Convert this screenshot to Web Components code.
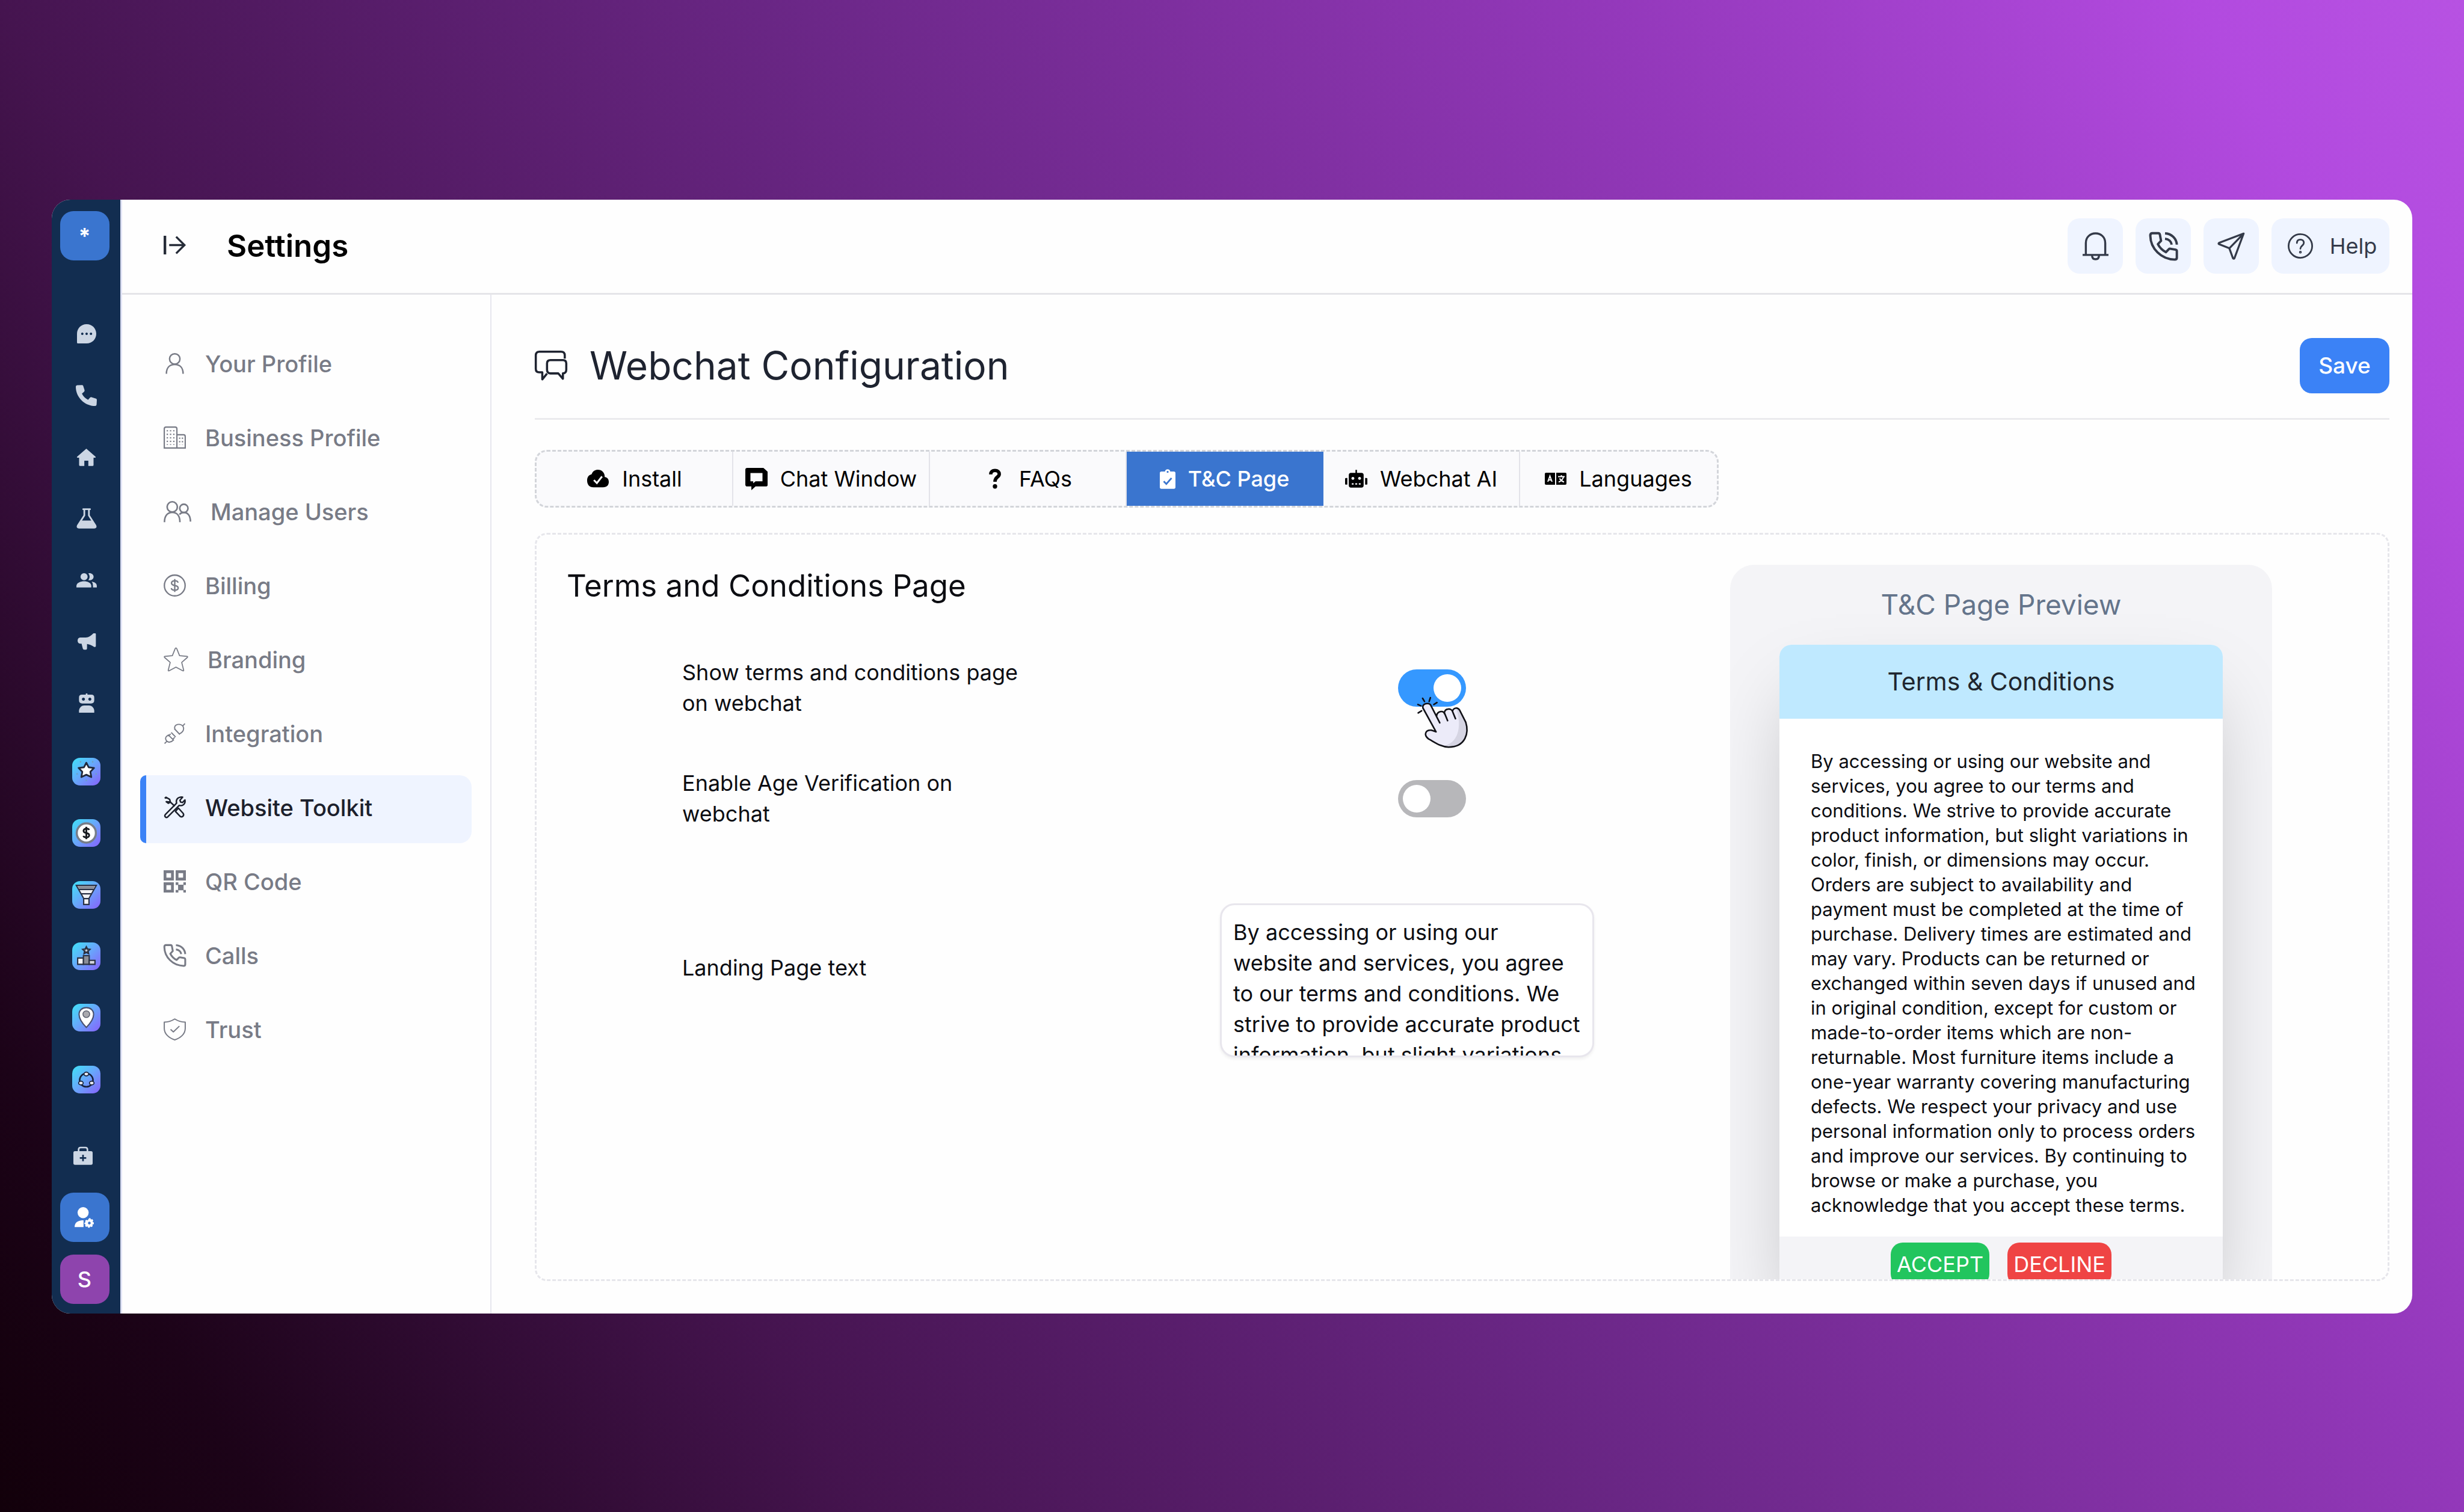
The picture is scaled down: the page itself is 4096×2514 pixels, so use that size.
<!DOCTYPE html>
<html lang="en">
<head>
<meta charset="utf-8">
<title>Settings – Webchat Configuration</title>
<style>
  html, body { margin: 0; height: 100%; }
  body {
    font-family: Inter, "Liberation Sans", sans-serif;
    color: #0c0d12;
    background: linear-gradient(60deg, #12000a 0%, #1c0318 8%, #45144f 26%, #6b2787 50%, #9338ba 74%, #b24adf 92%, #b752e2 100%);
  }
</style>
</head>
<body>
<settings-app></settings-app>

<script>
const ICONS = {
  chat: [24, 24, 32, 32, '<path fill="currentColor" fill-rule="evenodd" d="M12 0C18.8 0 24 5.2 24 12S18.8 24 12 24H1.2Q0 24 0 22.8V12C0 5.2 5.2 0 12 0ZM6.6 10.5a1.5 1.5 0 1 0 .01 0ZM12 10.5a1.5 1.5 0 1 0 .01 0ZM17.4 10.5a1.5 1.5 0 1 0 .01 0Z"/>'],
  phone: [24, 24, 35, 35, '<path fill="currentColor" d="M1.6.4 7 .1Q8 .1 8.4 1L10 6Q10.200 7 9.500 7.700L7 10C8.500 13.200 10.800 15.500 14 17L16.300 14.400Q17 13.700 18 14L23 15.600Q24 16 24 17L23.700 22.400Q23.500 24 22 24C10 24 0 14 0 2Q0 .5 1.600 .4Z"/>'],
  home: [24, 24, 33, 32, '<path fill="currentColor" d="M12 1.500 23.600 11.600Q24 12.600 23 12.800H21V22Q21 23 20 23H14.500V16.500H9.500V23H4Q3 23 3 22V12.800H1Q0 12.600.4 11.600Z"/>'],
  flask: [24, 24, 34, 36, '<path fill="none" stroke="currentColor" stroke-width="2" stroke-linejoin="round" stroke-linecap="round" d="M8 1.200H16M9.300 1.200V8.500L1.600 20.500Q.8 22.800 3 22.800H21Q23.200 22.800 22.400 20.500L14.700 8.500V1.200"/><path fill="currentColor" d="M5.500 14.500H18.500L22.500 21V23H1.500V21Z"/>'],
  people: [24, 17, 34, 24, '<g fill="currentColor"><circle cx="9" cy="4.200" r="4.200"/><path d="M0 16.800V15C0 11.500 5 9.600 9 9.600S17.500 11.500 17.500 15V16.800Z"/><path d="M14 .3C16.500-.6 20.200 1 20.200 4.200S16.500 9 14 8.100C16 5.800 16 2.600 14 .3ZM18 10C21.500 10.600 24 12.300 24 15V16.800H19.500V15Q19.700 12 18 10Z"/></g>'],
  horn: [24, 24, 32, 32, '<path fill="currentColor" d="M20.500 1.500H22.500Q23.500 1.500 23.500 2.500V17.500Q23.500 18.500 22.500 18.500H21.500C17.500 16 14.500 15 12.500 14.800V20Q12.500 22 10.500 22H9Q7.600 22 7.200 20.500L5.700 14.500H4C-.3 14.500-.3 6.800 4 6.800H11C14.500 6.600 17.500 4.500 20.500 1.500Z"/>'],
  bot: [24, 24, 32, 34, '<g fill="currentColor"><path fill-rule="evenodd" d="M11 0H13V1.500H18Q21.500 1.500 21.500 5V8.500Q21.500 12.500 17.500 12.500H6.500Q2.500 12.500 2.500 8.500V5Q2.500 1.500 6 1.500H11ZM8 5.200a1.900 1.900 0 1 0 .01 0ZM16 5.200a1.900 1.900 0 1 0 .01 0Z"/><path d="M2.500 24V21Q4 15 9 15H15Q20 15 21.500 21V24Z"/></g>'],
  bag: [24, 24, 32, 32, '<path fill="none" stroke="currentColor" stroke-width="2" d="M6.500 7V4Q6.500 1.500 9 1.500H15Q17.500 1.500 17.500 4V7"/><path fill="currentColor" fill-rule="evenodd" d="M2 6H22Q24 6 24 8V21Q24 23 22 23H2Q0 23 0 21V8Q0 6 2 6ZM11 10.500V13.500H8V15.500H11V18.500H13V15.500H16V13.500H13V10.500Z"/>'],
  admin: [24, 24, 36, 34, '<g fill="currentColor"><ellipse cx="10" cy="6.500" rx="6.500" ry="6.500"/><path d="M0 23.500C0 18 4 15.500 10.500 15.500V23.500Z"/><path fill-rule="evenodd" d="m17 13 1.600.1.500 1.500 1.600-.4 1.200 1.500-.8 1.600 1.500.9-.1 1.800-1.700.7.500 1.500-1.400 1.200-1.500-.7-.8 1.400h-1.700l-.8-1.500-1.600.7-1.200-1.300.6-1.500-1.400-.8V18.500l1.400-.8-.6-1.500L13.700 15l1.700.6ZM17.300 17.200a1.600 1.600 0 1 0 .01 0Z"/></g>'],
  bell: [24, 26, 43, 47, '<g fill="none" stroke="currentColor" stroke-width="1.900"><path d="M3 20.500V10C3 4.500 7 1 12 1S21 4.500 21 10V20.500M0 21H24"/><path d="M8.800 21.500C8.800 23.800 10 25 12 25S15.200 23.800 15.200 21.500"/></g>'],
  call: [24, 24, 47, 47, '<g fill="none" stroke="currentColor" stroke-width="2" stroke-linejoin="round"><path d="M2.300.9H7.600Q8.600.9 8.900 2L9.900 7.300 7.200 10.200C8.800 13.300 11.200 15.600 14 17L16.600 14.400Q17 14 17.800 14.100L22.300 14.900Q23.300 15.200 23.300 16.200V21.700Q23.300 23.200 21.500 23.300C10 23 1 14 .8 3.200Q.7 1 2.300.9Z"/><path d="M13.300 1C19 1.300 23 5.500 23.300 10.600M13.300 5.600C16.500 5.900 18.600 8 18.900 10.600"/></g>'],
  send: [24, 24, 46, 46, '<path fill="none" stroke="currentColor" stroke-width="1.700" stroke-linejoin="round" d="M22.800 1.200 1.500 9.300Q.6 10 1.500 10.400L10.400 14 13.500 22.600Q14.300 23.400 14.800 22.600ZM10.400 14 22.800 1.200"/>'],
  help: [24, 24, 42, 42, '<g fill="none" stroke="currentColor" stroke-width="1.600" stroke-linecap="round"><circle cx="12" cy="12" r="11.200"/><path d="M8.700 9.200C8.700 7 10 5.900 12 5.900S15.300 7.200 15.300 9C15.300 11.500 12 11.800 12 14.600"/><circle cx="12" cy="17.800" r=".5"/></g>'],
  collapse: [24, 20, 37, 31, '<g fill="none" stroke="currentColor"><path stroke-width="2.800" d="M1.400 0V20"/><path stroke-width="2.200" d="M6 10H22.500M13.500 1 22.500 10 13.500 19"/></g>'],
  user: [24, 24, 37, 37, '<g fill="none" stroke="currentColor" stroke-width="1.600"><circle cx="12" cy="7" r="5.600"/><path d="M3 23C3 16 7 13 12 13S21 16 21 23"/></g>'],
  building: [24, 24, 37, 37, '<g fill="none" stroke="currentColor" stroke-width="1.400"><path d="M.7 23.300V2.500Q.7.700 2.500.7H12.500Q14.300.7 14.300 2.500V23.300ZM14.300 9H21.500Q23.300 9 23.300 11V23.300H14.300"/><path stroke-dasharray="1.400 2.400" d="M4 4V20M7.500 4V20M11 4V20M17.300 12V20M20.300 12V20"/></g>'],
  users: [28, 22, 44, 34, '<g fill="none" stroke="currentColor" stroke-width="1.600"><circle cx="8.700" cy="6" r="5.200"/><path d="M.8 21.500C.8 15 4 11.500 8.700 11.500S16.500 15 16.500 21.500"/><circle cx="20.500" cy="7.500" r="4.200"/><path d="M16 13.800C17.200 12.200 18.600 11.700 20.500 11.700 24.500 11.700 27.200 15 27.200 21"/></g>'],
  dollar: [24, 24, 37, 37, '<g fill="none" stroke="currentColor" stroke-width="1.500"><circle cx="12" cy="12" r="11.200"/><path d="M15.500 9Q15.300 6.900 12 6.900T8.500 9.300Q8.500 11.500 12 12T15.700 14.700Q15.500 17.100 12 17.100T8.300 14.900M12 5V19"/></g>'],
  star: [24, 24, 38, 38, '<path fill="none" stroke="currentColor" stroke-width="1" stroke-linejoin="round" d="M12 .8Q12.500.8 12.800 1.500L15.500 8.300 22.800 9Q23.800 9.300 23 10.100L17.600 14.900 19.500 22.400Q19.600 23.400 18.600 23L12 19.400 5.400 23Q4.400 23.400 4.500 22.400L6.400 14.900 1 10.100Q.2 9.300 1.200 9L8.500 8.300 11.200 1.500Q11.500.8 12 .8Z"/>'],
  plug: [24, 24, 37, 35, '<g fill="none" stroke="currentColor" stroke-width="1.300"><path d="M11.500 6.500 17.800 13.200M12.300 7.300C11 4.500 12.500 2.500 15 1.800 18 1.200 20 2 21.500 4 23 6.800 22 10.200 17.300 12.500M21 3.500 23.600.8M4.300 13.300 11 20M5 14C2 15 .8 17 2 19.500 3.500 22.500 7 23 10.500 19.500M3 21 .4 23.500M7.300 12.500 4.700 15M12 16.500 9.500 18.800M8 11 13 16"/></g>'],
  tools: [24, 24, 37, 37, '<g fill="none" stroke="currentColor" stroke-width="1.600" stroke-linejoin="round"><path d="M1.200 2.200 2.500 1 6.500 3.300 7.300 6.200 12 10.700M7.300 6.200 5 7.500 2.800 5.800Z"/><path d="M14.500 14.200 16 12.800 21 18.300C22.500 20.500 20.500 23 18 21.800L12.700 16.300Z"/><path d="M15.700 1.800C18 .5 19.500.7 20.500 1L17.600 4.200 18.300 6.200 20.300 6.700 23 4C23.700 8 20.800 10.800 16.800 9.800L4.500 22.200C2.500 23.800.4 21.700 1.800 19.700L14 7.400C13.300 5 13.800 3.200 15.700 1.800Z"/></g>'],
  qr: [24, 24, 37, 37, '<g fill="none" stroke="currentColor" stroke-width="3"><path d="M1.500 1.500H9.500V9.500H1.500ZM14.500 1.500H22.500V9.500H14.500ZM1.500 14.500H9.500V22.500H1.500Z"/></g><path fill="currentColor" d="M13 13H15.900V15.900H13ZM21.300 13H24V15.900H21.300ZM15.600 15.600H21.500V21.500H15.600ZM13 21.300H15.900V24H13ZM21.300 21.300H24V24H21.300Z"/>'],
  shield: [24, 24, 37, 37, '<g fill="none" stroke="currentColor" stroke-width="1.300" stroke-linejoin="round"><path d="M12 .8Q17 4 23.300 4.200V11C23.300 17 18 21.500 12 23.300 6 21.500.7 17 .7 11V4.200Q7 4 12 .8Z"/><path d="M7.500 12 10.500 14.800 17 8.500"/></g>'],
  bubbles: [26, 24, 54, 50, '<g fill="none" stroke="currentColor" stroke-width="1.700" stroke-linejoin="round"><path d="M24 6.300V3.800Q24 .8 21 .8H3.800Q.8.8.8 3.800V14.500Q.8 17.300 3.500 17.300H6V23L9.800 18.300"/><path d="M12.500 7.500H22.500Q25.200 7.500 25.200 10.200V15.200Q25.200 18 22.500 18.200V22.500L18.800 18.200H12.500Q9.800 18 9.800 15.200V10.200Q9.800 7.500 12.500 7.500Z"/></g>'],
  cloud: [24, 20, 38, 30, '<path fill="currentColor" d="M19.500 8C19.700 3 16 0 12 0 9 0 6.200 1.500 5 5 1.500 6 0 8.500 0 12 0 16.500 2.500 19.500 7 19.500H17.500C22 19.500 24 17 24 13.500 24 10.500 22.500 8.500 19.500 8Z"/><path fill="none" stroke="#fafafc" stroke-width="2" d="M7.500 11.500 10.800 14.800 16.500 7.500"/>'],
  window: [24, 24, 37, 37, '<path fill="currentColor" fill-rule="evenodd" d="M2 0H19.500L24 4V18.500Q24 20 22 20H11L6.500 24V20H2Q0 20 0 18V2Q0 0 2 0ZM5.500 5.500V14.500H8.500V16.500L11 14.500H18.500V5.500Z"/>'],
  question: [24, 24, 38, 34, '<path fill="none" stroke="currentColor" stroke-width="4" d="M7 6.800C7 4 9 2.300 12 2.300S17 4 17 6.500C17 10.500 12 9.500 12 15.500"/><circle cx="12" cy="21" r="2.600" fill="currentColor"/>'],
  clip: [24, 30, 26, 33, '<path fill="currentColor" fill-rule="evenodd" d="M2.500 3.500H8C8 1.500 10 0 12 0S16 1.500 16 3.500H21.500Q24 3.500 24 6V27.500Q24 30 21.500 30H2.500Q0 30 0 27.500V6Q0 3.500 2.500 3.500ZM12 2.500a1.500 1.500 0 1 0 .01 0Z"/><path fill="none" stroke="#3a75cf" stroke-width="2.600" d="M6 18.500 10 22.500 18 13.500"/>'],
  robot: [30, 24, 37, 30, '<path fill="currentColor" fill-rule="evenodd" d="M14 0H16V4H22Q25 4 25 7V21Q25 24 22 24H8Q5 24 5 21V7Q5 4 8 4H14ZM10.500 9.500a2 2 0 1 0 .01 0ZM19.500 9.500a2 2 0 1 0 .01 0ZM9 18V20H11.500V18ZM13.700 18V20H16.300V18ZM18.500 18V20H21V18ZM0 12Q0 11 1.500 11H3V20H1.500Q0 20 0 19ZM27 11H28.500Q30 11 30 12V19Q30 20 28.500 20H27Z"/>'],
  lang: [36, 20, 36, 20, '<path fill="currentColor" d="M2 0H17V20H2Q0 20 0 18V2Q0 0 2 0ZM19 0H34Q36 0 36 2V18Q36 20 34 20H19Z"/><g fill="none" stroke="#fafafc" stroke-width="2"><path d="M5 15 8.500 5.500 12 15M6.300 12H10.700M22 6.500H33M27.500 4V6.500M31 7C30 11 27 14 23 15.500M24.500 9.500C26 12 29 14.500 32 15.500"/></g>'],
  gstar: [24, 24, 47, 46, '<path fill="#fff" stroke="#222a3c" stroke-width="1.500" stroke-linejoin="round" d="m12 4.300 2 3.900 4.700.6-3.200 3.300.8 4.600L12 14.700l-4.300 2 .8-4.600-3.200-3.300 4.700-.6Z"/><g fill="#6f9fc4"><circle cx="7" cy="3.500" r=".7"/><circle cx="17.500" cy="3.500" r=".7"/><circle cx="4" cy="14" r=".7"/><circle cx="20.500" cy="14" r=".7"/><circle cx="12" cy="19.500" r=".7"/></g>'],
  gcoin: [24, 24, 47, 46, '<ellipse cx="12" cy="12" rx="8.300" ry="8.300" fill="#fff" stroke="#777d88" stroke-width="1.800"/><path fill="none" stroke="#16191f" stroke-width="1.500" d="M14.400 9.400Q14 8.200 12 8.200T9.600 10Q9.600 11.600 12 12T14.500 14Q14.300 15.800 12 15.800T9.500 14.500M12 6.600V17.400"/>'],
  gfunnel: [24, 24, 47, 46, '<path fill="#f3f3f5" stroke="#2a3145" stroke-width="1.100" d="M3.300 3.700H20.700L14.300 15V20.300H9.700V15Z"/><path fill="#8d8f99" d="M4.500 4.300H19.500L18 7H6Z"/><path stroke="#2a3145" stroke-width="1.100" d="M5.200 7.300H18.800M7.300 11H16.700M9.500 15.200H14.500"/>'],
  gpodium: [24, 24, 47, 46, '<g stroke="#2a3040" stroke-width="1.100"><path fill="#f5f5f7" d="M4.500 13.500H9.500V19H4.500Z"/><path fill="#8a8d97" d="M9.500 11.500H14.500V19H9.500Z"/><path fill="#d4d6dd" d="M14.500 15.500H19.500V19H14.500Z"/><path fill="#cfd3dd" stroke-width="1.400" d="m12 4 .9 1.800 2 .3-1.500 1.400.4 2-1.800-1-1.800 1 .4-2-1.500-1.400 2-.3Z"/></g>'],
  gpin: [24, 24, 47, 46, '<path fill="#fff" stroke="#4a5170" stroke-width="1.100" d="M12 20.500C8 16.500 5.700 12.500 5.700 9.300 5.700 5.500 8.500 3.300 12 3.300S18.300 5.500 18.300 9.300C18.300 12.500 16 16.500 12 20.500Z"/><circle cx="12" cy="9" r="2.900" fill="#a9a9ae" stroke="#5d6170" stroke-width=".8"/>'],
  gcycle: [24, 24, 47, 46, '<circle cx="12" cy="12.500" r="5.800" fill="none" stroke="#16213c" stroke-width="1.300"/><g fill="#e8eaf2" stroke="#16213c" stroke-width=".9"><ellipse cx="12" cy="7.200" rx="2" ry="1.600"/><ellipse cx="7.300" cy="15" rx="2" ry="1.600"/><ellipse cx="16.700" cy="15" rx="2" ry="1.600"/></g>'],
  pointer: [83, 83, 83, 83, '<path fill="#ecebf9" d="M8.300 15.400C9.500 9 18.500 7.500 21.300 12.300L31.200 29.500C32 25 38 21 42 27 44 20 50 18 54 24 57 18 64 14.500 69.200 20.400L79.600 40.900C85 58 80 82 51 82.200 38 80 28 74 17.700 68.600 9 62 14 53.500 22.400 54.100L30.200 56.800Z"/><path fill="#d6d5e3" d="M69 20 79.600 40.900C85 58 80 82 51 82.200L43 80C66 76 74 50 64 18Z"/><g fill="none" stroke="#111117" stroke-width="2.600" stroke-linecap="round" stroke-linejoin="round"><path d="M36.400 41.800 21.300 12.300C18.500 7.500 7 9.500 8.300 17L30.200 56.800 22.400 54.100C12.500 53.500 9 62 17.700 68.600 28 74 38 82 51 82.200 80 82 85 58 79.600 40.900L69.200 20.400C65 14.500 58 18 57.600 23L62.500 35M49.400 38.200 44 25C45 17 56 17.500 57.600 23M31.200 30C32 22.500 42 20.500 44.500 27"/><path d="M7.800 1 11 6.400M20.800 0 18.700 6.400M0 11.400 5.200 13.600M31.700 8.200 26.500 11.400M.5 25.400 6.200 21.800"/></g>']
};

function define(name, html, setup) {
  const template = document.createElement('template');
  template.innerHTML = html;
  customElements.define(name, class extends HTMLElement {
    constructor() {
      super();
      this.attachShadow({ mode: 'open' }).append(template.content.cloneNode(true));
    }
    connectedCallback() { if (setup) setup(this, this.shadowRoot); }
  });
}

define('ui-icon', `
  <style>:host { display: inline-block; flex: none; } svg { display: block; overflow: visible; }</style>
  <svg aria-hidden="true"></svg>`,
  (el, root) => {
    const [vw, vh, w, h, body] = ICONS[el.getAttribute('name')];
    const k = el.hasAttribute('size') ? el.getAttribute('size') / w : 1;
    const svg = root.querySelector('svg');
    svg.setAttribute('viewBox', `0 0 ${vw} ${vh}`);
    svg.setAttribute('width', Math.round(w * k));
    svg.setAttribute('height', Math.round(h * k));
    svg.innerHTML = body;
  });

define('rail-item', `
  <style>
    :host { display: flex; flex: 1 1 0; align-items: center; justify-content: center; color: #ccd6e4; }
    a { display: flex; align-items: center; justify-content: center; color: inherit; text-decoration: none; width: 82px; height: 82px; }
    :host([tile]) a { width: 47px; height: 46px; border-radius: 13px; background: linear-gradient(135deg, #43dcf8 5%, #69a5fb 50%, #8468fb 95%); }
  </style>
  <a href="#"></a>`,
  (el, root) => {
    const link = root.querySelector('a');
    link.innerHTML = `<ui-icon name="${el.getAttribute('icon')}"></ui-icon>`;
    link.setAttribute('aria-label', el.getAttribute('icon'));
  });

define('app-rail', `
  <style>
    :host { display: flex; flex-direction: column; align-items: center; width: 117px; flex: none; box-sizing: border-box;
      padding: 19px 5px 16px 0; background: #122d50; border-right: 3px solid #dfe2f5; }
    .square { display: flex; align-items: center; justify-content: center; width: 82px; height: 82px; border: 0; border-radius: 22px;
      font: 500 36px/1 Inter, sans-serif; color: #fff; background: #3a75cf; flex: none; padding: 0; }
    .logo { margin-bottom: 71px; font-weight: 700; }
    .nav { display: flex; flex-direction: column; padding-left: 6px; }
    .main { flex: 717 1 0; margin-bottom: 11px; }
    .apps { flex: 615 1 0; margin-bottom: 35px; }
    .bag { height: 82px; display: flex; margin-bottom: 20px; padding-right: 5px; }
    .avatar { background: #8e44ad; margin-top: 21px; }
  </style>
  <button class="square logo">*</button>
  <nav class="nav main">
    <rail-item icon="chat"></rail-item><rail-item icon="phone"></rail-item><rail-item icon="home"></rail-item>
    <rail-item icon="flask"></rail-item><rail-item icon="people"></rail-item><rail-item icon="horn"></rail-item><rail-item icon="bot"></rail-item>
  </nav>
  <nav class="nav apps">
    <rail-item tile icon="gstar"></rail-item><rail-item tile icon="gcoin"></rail-item><rail-item tile icon="gfunnel"></rail-item>
    <rail-item tile icon="gpodium"></rail-item><rail-item tile icon="gpin"></rail-item><rail-item tile icon="gcycle"></rail-item>
  </nav>
  <div class="bag"><rail-item icon="bag"></rail-item></div>
  <button class="square" aria-label="Account settings"><ui-icon name="admin"></ui-icon></button>
  <button class="square avatar">S</button>`);

define('app-header', `
  <style>
    :host { display: flex; align-items: center; box-sizing: border-box; height: 158px; padding: 0 38px 1px 69px;
      border-bottom: 3px solid #e5e5e9; color: #2d3340; }
    .toggle { padding: 0; border: 0; background: none; color: #262c38; }
    h1 { margin: 0 auto 0 68px; font-size: 51px; line-height: 64px; font-weight: 600; color: #000; }
    .actions { display: flex; gap: 21px; }
    .actions button { display: flex; align-items: center; justify-content: center; gap: 28px; width: 92px; height: 92px; padding: 0;
      border: 0; border-radius: 20px; background: #eff4ff; color: #343a49; font: 400 36px/44px Inter, sans-serif; }
    .actions .help { width: 196px; padding-left: 6px; }
  </style>
  <button class="toggle" aria-label="Toggle sidebar"><ui-icon name="collapse"></ui-icon></button>
  <h1>Settings</h1>
  <div class="actions">
    <button aria-label="Notifications"><ui-icon name="bell"></ui-icon></button>
    <button aria-label="Calls"><ui-icon name="call"></ui-icon></button>
    <button aria-label="Send"><ui-icon name="send"></ui-icon></button>
    <button class="help"><ui-icon name="help"></ui-icon>Help</button>
  </div>`);

define('nav-link', `
  <style>
    :host { display: block; }
    a { display: flex; align-items: center; gap: 32px; box-sizing: border-box; height: 113px; padding: 0 30px 6px 29px;
      border-left: 10px solid transparent; border-radius: 10px 20px 20px 10px; color: #787b86; text-decoration: none;
      font-size: 38px; line-height: 48px; font-weight: 500; white-space: nowrap; }
    :host([active]) a { background: #eff4ff; border-left-color: #3b82f6; color: #1c202c; }
    span { display: flex; }
  </style>
  <a href="#"><span></span><slot></slot></a>`,
  (el, root) => {
    const size = el.getAttribute('size') || 37;
    root.querySelector('span').innerHTML = `<ui-icon name="${el.getAttribute('icon')}" size="${size}"></ui-icon>`;
  });

define('settings-nav', `
  <style>
    :host { display: flex; flex-direction: column; gap: 10px; width: 614px; flex: none; box-sizing: border-box;
      padding: 61px 31px 0 30px; border-right: 2px solid #e7e7ee; }
  </style>
  <nav-link icon="user">Your Profile</nav-link>
  <nav-link icon="building">Business Profile</nav-link>
  <nav-link icon="users" size="46">Manage Users</nav-link>
  <nav-link icon="dollar">Billing</nav-link>
  <nav-link icon="star" size="41">Branding</nav-link>
  <nav-link icon="plug">Integration</nav-link>
  <nav-link icon="tools" active>Website Toolkit</nav-link>
  <nav-link icon="qr">QR Code</nav-link>
  <nav-link icon="call">Calls</nav-link>
  <nav-link icon="shield">Trust</nav-link>`);

define('tab-bar', `
  <style>
    :host { display: block; }
    div { display: inline-flex; vertical-align: top; box-sizing: border-box; height: 96px; border: 3px dashed #d3d5da; border-radius: 20px; background: #fafafc; }
    button { display: flex; align-items: center; justify-content: center; gap: 21px; box-sizing: border-box; width: 327px; padding: 0;
      border: 0; border-right: 2px solid #e3e3e9; background: none; color: #000; font: 400 36px/48px Inter, sans-serif; white-space: nowrap; }
    button:last-child { border-right: 0; }
    button.on { background: #3a75cf; color: #fff; border-right-color: #3a75cf; font-weight: 500; }
  </style>
  <div role="tablist">
    <button role="tab"><ui-icon name="cloud"></ui-icon>Install</button>
    <button role="tab"><ui-icon name="window"></ui-icon>Chat Window</button>
    <button role="tab"><ui-icon name="question"></ui-icon>FAQs</button>
    <button role="tab" class="on" aria-selected="true"><ui-icon name="clip"></ui-icon>T&amp;C Page</button>
    <button role="tab"><ui-icon name="robot"></ui-icon>Webchat AI</button>
    <button role="tab"><ui-icon name="lang"></ui-icon>Languages</button>
  </div>`);

define('toggle-row', `
  <style>
    :host { display: grid; grid-template-columns: 580px 704px; column-gap: 314px; align-items: center; }
    .cell { position: relative; display: flex; justify-content: center; }
    input { appearance: none; margin: 0; width: 113px; height: 62px; border-radius: 31px; background: #b7b7ba; }
    input::before { content: ""; display: block; width: 46px; height: 46px; margin: 8px; border-radius: 50%; background: #fff; }
    input:checked { background: #3598ff; }
    input:checked::before { margin-left: 59px; }
    ::slotted(*) { position: absolute; left: 329px; top: 47px; }
  </style>
  <label for="box"></label>
  <div class="cell"><input type="checkbox" role="switch" id="box"><slot></slot></div>`,
  (el, root) => {
    root.querySelector('label').textContent = el.getAttribute('label');
    root.querySelector('input').checked = el.hasAttribute('checked');
  });

define('text-row', `
  <style>
    :host { display: grid; grid-template-columns: 580px 704px; column-gap: 314px; align-items: center; }
    textarea { display: block; box-sizing: border-box; width: 622px; height: 256px; margin: 41px 0 0; padding: 20px 19px 20px 19px;
      border: 3px solid #e8e6ed; border-radius: 24px; background: #fff; box-shadow: 0 3px 5px #0000000f; color: inherit;
      font: 400 36px/51px Inter, sans-serif; resize: none; overflow: hidden; }
  </style>
  <label for="box"></label>
  <div><textarea id="box"></textarea></div>`,
  (el, root) => {
    root.querySelector('label').textContent = el.getAttribute('label');
    root.querySelector('textarea').value = el.textContent.trim();
  });

define('terms-preview', `
  <style>
    :host { display: block; box-sizing: border-box; padding: 0 82px 82px; border-radius: 40px; background: #f4f4f7; overflow: hidden; }
    h3 { margin: 0; font-size: 46px; line-height: 133px; font-weight: 400; color: #64748b; text-align: center; }
    .card { border-radius: 20px; background: #fff; box-shadow: 0 64px 128px -31px #00000040; }
    h4 { margin: 0; font-size: 41px; line-height: 123px; font-weight: 400; color: #20262e; text-align: center;
      background: #bfe9ff; border-radius: 20px 20px 0 0; }
    p { margin: 0; padding: 50px 45px 32px 52px; font-size: 31px; line-height: 41px; }
    footer { display: flex; justify-content: center; gap: 30px; padding: 10px 0; background: #f4f4f7; border-radius: 0 0 20px 20px; }
    button { height: 72px; padding: 0 10px; border: 0; border-radius: 20px; color: #fff; background: #22c55e; font: 400 36px/44px Inter, sans-serif; }
    .no { background: #ef4444; }
  </style>
  <h3>T&amp;C Page Preview</h3>
  <div class="card">
    <h4>Terms &amp; Conditions</h4>
    <p><slot></slot></p>
    <footer><button>ACCEPT</button><button class="no">DECLINE</button></footer>
  </div>`);

define('terms-panel', `
  <style>
    :host { display: flex; gap: 40px; align-items: flex-start; box-sizing: border-box; min-height: 0; padding: 50px 192px 0 50px;
      border: 3px dashed #e6e6eb; border-radius: 20px; overflow: hidden; }
    form { flex: 1; min-width: 0; font-size: 36px; line-height: 51px; }
    h2 { margin: 0 0 84px; font-size: 51px; line-height: 70px; font-weight: 400; }
    .rows { display: flex; flex-direction: column; gap: 82px; padding-left: 192px; }
    terms-preview { width: 901px; flex: none; }
  </style>
  <form>
    <h2>Terms and Conditions Page</h2>
    <div class="rows">
      <toggle-row label="Show terms and conditions page on webchat" checked><ui-icon name="pointer"></ui-icon></toggle-row>
      <toggle-row label="Enable Age Verification on webchat"></toggle-row>
      <text-row label="Landing Page text">By accessing or using our website and services, you agree to our terms and conditions. We strive to provide accurate product information, but slight variations in color, finish, or dimensions may occur.</text-row>
    </div>
  </form>
  <terms-preview>By accessing or using our website and services, you agree to our terms and conditions. We strive to provide accurate product information, but slight variations in color, finish, or dimensions may occur. Orders are subject to availability and payment must be completed at the time of purchase. Delivery times are estimated and may vary. Products can be returned or exchanged within seven days if unused and in original condition, except for custom or made-to-order items which are non-returnable. Most furniture items include a one-year warranty covering manufacturing defects. We respect your privacy and use personal information only to process orders and improve our services. By continuing to browse or make a purchase, you acknowledge that you accept these terms.</terms-preview>`);

define('webchat-page', `
  <style>
    :host { display: flex; flex-direction: column; flex: 1; min-width: 0; box-sizing: border-box; padding: 72px 38px 54px 72px; }
    .head { display: flex; align-items: center; gap: 37px; padding-bottom: 41px; border-bottom: 3px solid #ebebee; color: #1e2330; }
    h2 { margin: 0 auto 0 0; font-size: 64px; line-height: 80px; font-weight: 400; }
    .save { width: 149px; height: 92px; padding: 0; border: 0; border-radius: 20px; background: #3b82f6; color: #fff; font: 500 37px/44px Inter, sans-serif; }
    tab-bar { margin: 50px 0 42px; }
    terms-panel { flex: 1; }
  </style>
  <div class="head"><ui-icon name="bubbles"></ui-icon><h2>Webchat Configuration</h2><button class="save">Save</button></div>
  <tab-bar></tab-bar>
  <terms-panel></terms-panel>`);

define('settings-app', `
  <style>
    :host { display: flex; box-sizing: border-box; height: 100vh; padding: 332px 86px 330px; }
    .window { display: flex; flex: 1; min-width: 0; border-radius: 31px; background: #fefefe; overflow: hidden; }
    .body { display: flex; flex-direction: column; flex: 1; min-width: 0; }
    .cols { display: flex; flex: 1; min-height: 0; }
  </style>
  <div class="window">
    <app-rail></app-rail>
    <div class="body">
      <app-header></app-header>
      <div class="cols"><settings-nav></settings-nav><webchat-page></webchat-page></div>
    </div>
  </div>`);
</script>
</body>
</html>
